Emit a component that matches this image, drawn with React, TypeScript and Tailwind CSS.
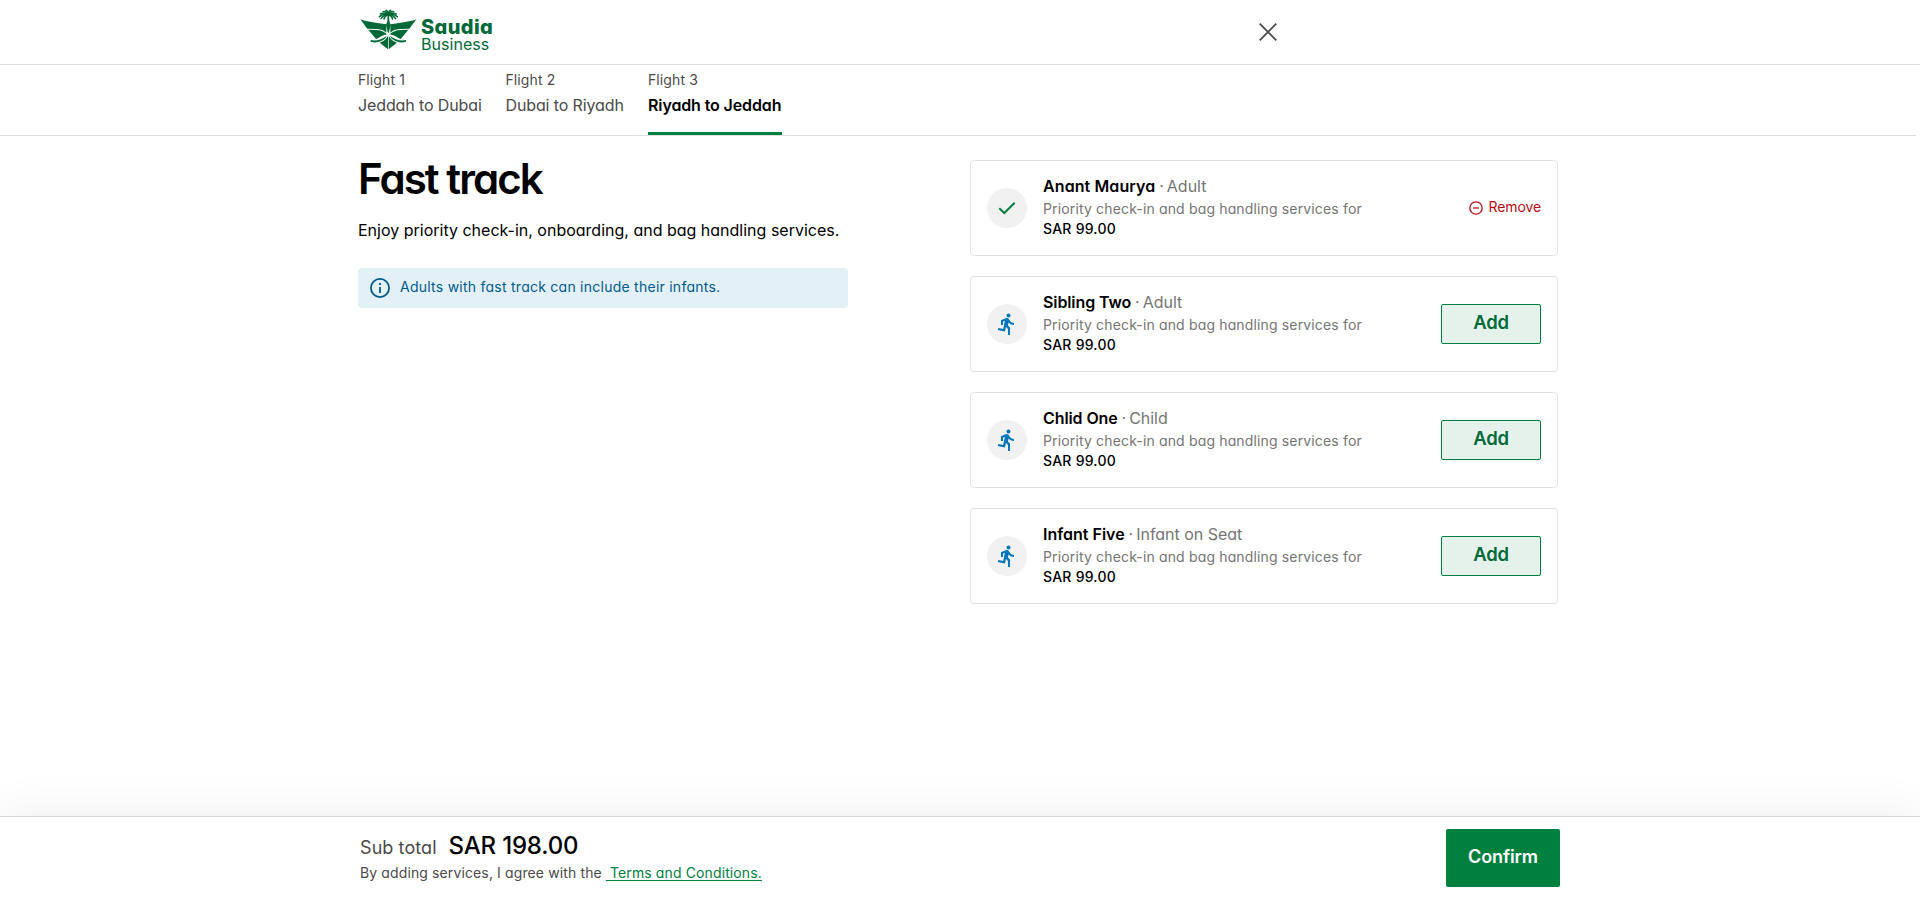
const HALF = (
  <>
    <path d="M13 40 C34 48 62 50 91 55 L91 80 C84 73 75 70 64 69 L34 68 Z" />
    <path d="M37 71.500 L64 72 C76 73 86 78 93 85 C82 87 74 91 66 97 L60 99 Z" />
    <path d="M44 102 C60 106 78 100 92 89 L88 97 C76 108 60 112 44 107 Z" />
    <path d="M71 110 C80 107 88 101 92 95 L96 90 L96 130 Z" />
    <g fill="none" stroke="currentColor" strokeWidth="4.4" strokeLinecap="round">
      <path d="M97 26 Q95 14 90 13" />
      <path d="M97 26 Q90 15 81 17" />
      <path d="M97 26 Q84 18 73 24" />
      <path d="M97 27 Q82 22 70 32" />
      <path d="M97 27 Q84 25 75 38" />
      <path d="M97 28 Q88 27 84 39" />
    </g>
  </>
);

function Logo() {
  return (
    <div className="flex h-12 items-start text-[#006937]">
      <svg viewBox="0 0 192 144" className="h-12 w-16 shrink-0" fill="currentColor" aria-hidden="true">
        {HALF}
        <g transform="translate(194 0) scale(-1 1)">{HALF}</g>
        <path d="M97 12 L99 28 H95 Z" />
        <path d="M95 26 H99 L100 46 L104 56 L99 78 L97 82 L95 78 L90 56 L94 46 Z" />
      </svg>
      <div className="mt-[10px] ml-[1px] flex flex-col">
        <span className="text-[20px] leading-[22px] font-extrabold tracking-[0.4px]">Saudia</span>
        <span className="-mt-[2px] text-[16px] leading-4 tracking-[0.05px]">Business</span>
      </div>
    </div>
  );
}

const TABS = [
  { label: "Flight 1", route: "Jeddah to Dubai", width: "w-[123.5px]", active: false },
  { label: "Flight 2", route: "Dubai to Riyadh", width: "w-[118.5px]", active: false },
  { label: "Flight 3", route: "Riyadh to Jeddah", width: "w-[134px]", active: true },
];

const PASSENGERS = [
  { name: "Anant Maurya", type: "Adult", added: true, spacing: "tracking-[0.1px]" },
  { name: "Sibling Two", type: "Adult", added: false, spacing: "tracking-[-0.1px]" },
  { name: "Chlid One", type: "Child", added: false, spacing: "tracking-[-0.1px]" },
  { name: "Infant Five", type: "Infant on Seat", added: false, spacing: "tracking-[0px]" },
];

function RunIcon() {
  return (
    <svg viewBox="0 0 24 24" className="size-6" fill="#0076bd" aria-hidden="true">
      <path d="M13.49 5.48c1.1 0 2-.9 2-2s-.9-2-2-2-2 .9-2 2 .9 2 2 2zm-3.6 13.9 1-4.4 2.1 2v6h2v-7.5l-2.1-2 .6-3c1.3 1.5 3.3 2.5 5.5 2.5v-2c-1.9 0-3.5-1-4.3-2.4l-1-1.6c-.4-.6-1-1-1.7-1-.3 0-.5.1-.8.1l-5.2 2.2v4.7h2v-3.4l1.8-.7-1.6 8.1-4.9-1-.4 2 7 1.4z" />
    </svg>
  );
}

function CheckIcon() {
  return (
    <svg viewBox="0 0 24 24" className="size-6" fill="none" stroke="#00803f" strokeWidth="2" aria-hidden="true">
      <path d="M4.3 12.2 9.3 17 19.7 6.8" />
    </svg>
  );
}

function PassengerCard({ name, type, added, spacing }: (typeof PASSENGERS)[number]) {
  return (
    <div className="flex h-24 items-center rounded border border-[#e3e3e3] px-4">
      <div className="flex size-10 shrink-0 items-center justify-center rounded-full bg-[#f1f1f1]">
        {added ? <CheckIcon /> : <RunIcon />}
      </div>
      <div className="ml-4 flex-1 pb-1">
        <p className="mb-px text-base leading-6 text-[#757575]">
          <span className={`font-semibold text-black ${spacing}`}>{name}</span>
          <span className="tracking-[-0.7px]"> · </span>
          <span className="tracking-[-0.02px]">{type}</span>
        </p>
        <p className="text-sm leading-5 tracking-[0.15px] text-[#757575]">Priority check-in and bag handling services for</p>
        <p className="text-sm leading-5 font-medium tracking-[0.23px] text-black">SAR 99.00</p>
      </div>
      {added ? (
        <button className="flex items-center gap-[5px] text-sm tracking-[-0.1px] text-[#b80c14]">
          <svg viewBox="0 0 14 14" className="size-[14px]" fill="none" stroke="currentColor" strokeWidth="1.3" aria-hidden="true">
            <circle cx="7" cy="7" r="6.2" />
            <path d="M4 7h6" />
          </svg>
          <span className="pb-[2px]">Remove</span>
        </button>
      ) : (
        <button className="h-10 w-[100px] rounded-[2px] border border-[#00803f] bg-[#e5f2eb] pb-[5px] text-[18.5px] leading-6 font-semibold tracking-[-0.2px] text-[#006937]">
          Add
        </button>
      )}
    </div>
  );
}

export default function App() {
  return (
    <div className="flex h-[901px] w-[1920px] flex-col overflow-hidden bg-white font-['Inter','Noto_Sans',sans-serif] [font-feature-settings:'cv11']">
      <header className="h-[65px] w-full border-b border-[#e0e0e0]">
        <div className="ml-[356px] flex w-[923px] items-start justify-between pt-[6px]">
          <Logo />
          <button aria-label="Close" className="mt-[17px] mr-[2px]">
            <svg viewBox="0 0 18 18" className="size-[18px]" fill="none" stroke="#4a4a4a" strokeWidth="1.8" aria-hidden="true">
              <path d="M.7.7 17.3 17.3M17.3.7.7 17.3" />
            </svg>
          </button>
        </div>
      </header>

      <nav className="h-[71px] w-[1916px] border-b border-[#e0e0e0]">
        <div className="ml-[358px] flex gap-6">
          {TABS.map((tab) => (
            <div
              key={tab.label}
              className={`flex h-[70px] flex-col pt-[5px] whitespace-nowrap ${tab.width} ${tab.active ? "border-b-[3px] border-[#00803f]" : ""}`}
            >
              <span className="text-sm leading-5 tracking-[0.1px] text-[#4a4a4a]">{tab.label}</span>
              <span
                className={`mt-[3px] text-base leading-6 tracking-[-0.12px] ${tab.active ? "font-semibold text-black" : "text-[#4a4a4a]"}`}
              >
                {tab.route}
              </span>
            </div>
          ))}
        </div>
      </nav>

      <main className="ml-[358px] flex w-[1200px] flex-1 items-start justify-between pt-6">
        <section className="w-[490px]">
          <h1 className="-mt-px text-[42px] leading-10 font-semibold tracking-[-1.95px] text-black">Fast track</h1>
          <p className="mt-[19px] text-base leading-6 whitespace-nowrap text-black">
            Enjoy priority check-in, onboarding, and bag handling services.
          </p>
          <div className="mt-[26px] flex h-10 items-center gap-[10px] rounded bg-[#e3f0f8] pl-3">
            <svg viewBox="0 0 20 20" className="size-5" fill="none" stroke="#005b8d" strokeWidth="1.8" aria-hidden="true">
              <circle cx="10" cy="10" r="9.1" />
              <path d="M10 9v6M10 5v2" />
            </svg>
            <span className="pb-[2px] text-sm tracking-[0.25px] text-[#005b8d]">Adults with fast track can include their infants.</span>
          </div>
        </section>
        <section className="flex w-[588px] flex-col gap-5">
          {PASSENGERS.map((p) => (
            <PassengerCard key={p.name} {...p} />
          ))}
        </section>
      </main>

      <footer className="h-[85px] border-t border-[#d8d8d8] bg-white shadow-[0_-10px_40px_rgba(0,0,0,0.05)]">
        <div className="ml-[360px] flex w-[1200px] items-start justify-between pt-3">
          <div>
            <div className="flex items-baseline gap-3 pt-px leading-8">
              <span className="text-lg leading-8 tracking-[0.08px] text-[#4a4a4a]">Sub total</span>
              <span className="text-2xl leading-8 font-medium tracking-[-0.2px] text-black">SAR 198.00</span>
            </div>
            <p className="-mt-px text-sm leading-5 tracking-[0.12px] text-[#4a4a4a]">
              By adding services, I agree with the{" "}
              <a className="whitespace-pre text-[#00803f] underline underline-offset-2"> Terms and Conditions.</a>
            </p>
          </div>
          <button className="h-[58px] w-[114px] rounded-[2px] bg-[#00803f] pb-[2px] text-lg font-semibold tracking-[-0.1px] text-white">
            Confirm
          </button>
        </div>
      </footer>
    </div>
  );
}
